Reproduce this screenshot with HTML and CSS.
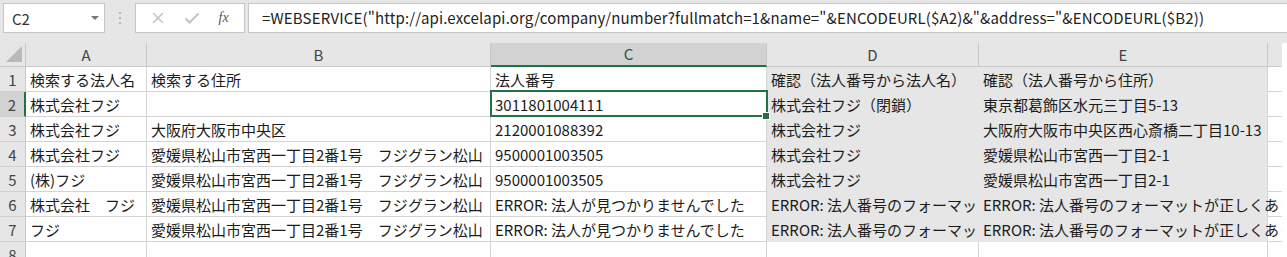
FILE: index.html
```html
<!DOCTYPE html>
<html lang="ja">
<head>
    <meta charset="UTF-8">
    <title>法人番号検索</title>
    <link rel="stylesheet" href="styles.css">
</head>
<body>
    <!-- Formula bar -->
    <div class="formula-bar">
        <div class="name-box">
            <span>C2</span>
            <span class="dropdown"></span>
        </div>
        <div class="grip">
            <span></span><span></span><span></span>
        </div>
        <div class="fx-buttons">
            <svg width="14" height="14" viewBox="0 0 14 14"><path d="M2 2 L12 12 M12 2 L2 12" stroke="#c4c4c4" stroke-width="1.6" fill="none"/></svg>
            <svg width="16" height="14" viewBox="0 0 16 14"><path d="M1.5 7.5 L5.5 11.5 L14.5 2.5" stroke="#c4c4c4" stroke-width="2" fill="none"/></svg>
            <span class="fx">fx</span>
        </div>
        <div class="formula">=WEBSERVICE("http://api.excelapi.org/company/number?fullmatch=1&amp;name="&amp;ENCODEURL($A2)&amp;"&amp;address="&amp;ENCODEURL($B2))</div>
    </div>

    <!-- Sheet -->
    <div class="sheet">
        <div class="hd corner"><span class="tri"></span></div>
        <div class="hd col">A</div>
        <div class="hd col">B</div>
        <div class="hd col active">C</div>
        <div class="hd col">D</div>
        <div class="hd col">E</div>
        <div class="hd col last"></div>

        <div class="hd row">1</div>
        <div class="cell">検索する法人名</div>
        <div class="cell">検索する住所</div>
        <div class="cell">法人番号</div>
        <div class="cell fill">確認（法人番号から法人名）</div>
        <div class="cell fill spill">確認（法人番号から住所）</div>
        <div class="cell empty"></div>

        <div class="hd row active">2</div>
        <div class="cell">株式会社フジ</div>
        <div class="cell"></div>
        <div class="cell current">3011801004111</div>
        <div class="cell fill">株式会社フジ（閉鎖）</div>
        <div class="cell fill spill">東京都葛飾区水元三丁目5-13</div>
        <div class="cell empty"></div>

        <div class="hd row">3</div>
        <div class="cell">株式会社フジ</div>
        <div class="cell">大阪府大阪市中央区</div>
        <div class="cell">2120001088392</div>
        <div class="cell fill">株式会社フジ</div>
        <div class="cell fill spill">大阪府大阪市中央区西心斎橋二丁目10-13</div>
        <div class="cell empty"></div>

        <div class="hd row">4</div>
        <div class="cell">株式会社フジ</div>
        <div class="cell">愛媛県松山市宮西一丁目2番1号　フジグラン松山</div>
        <div class="cell">9500001003505</div>
        <div class="cell fill">株式会社フジ</div>
        <div class="cell fill spill">愛媛県松山市宮西一丁目2-1</div>
        <div class="cell empty"></div>

        <div class="hd row">5</div>
        <div class="cell">(株)フジ</div>
        <div class="cell">愛媛県松山市宮西一丁目2番1号　フジグラン松山</div>
        <div class="cell">9500001003505</div>
        <div class="cell fill">株式会社フジ</div>
        <div class="cell fill spill">愛媛県松山市宮西一丁目2-1</div>
        <div class="cell empty"></div>

        <div class="hd row">6</div>
        <div class="cell">株式会社　フジ</div>
        <div class="cell">愛媛県松山市宮西一丁目2番1号　フジグラン松山</div>
        <div class="cell">ERROR: 法人が見つかりませんでした</div>
        <div class="cell fill">ERROR: 法人番号のフォーマッ</div>
        <div class="cell fill spill">ERROR: 法人番号のフォーマットが正しくありません</div>
        <div class="cell empty"></div>

        <div class="hd row">7</div>
        <div class="cell">フジ</div>
        <div class="cell">愛媛県松山市宮西一丁目2番1号　フジグラン松山</div>
        <div class="cell">ERROR: 法人が見つかりませんでした</div>
        <div class="cell fill">ERROR: 法人番号のフォーマッ</div>
        <div class="cell fill spill">ERROR: 法人番号のフォーマットが正しくありません</div>
        <div class="cell empty"></div>

        <div class="hd row">8</div>
        <div class="cell"></div>
        <div class="cell"></div>
        <div class="cell"></div>
        <div class="cell"></div>
        <div class="cell"></div>
        <div class="cell empty"></div>
    </div>
</body>
</html>
```

FILE: styles.css
```css
body {
    margin: 0;
    width: 1287px;
    height: 257px;
    overflow: hidden;
    background-color: #ffffff;
    font-family: "Noto Sans CJK JP", "Noto Sans", sans-serif;
    color: #1c1c1c;
}

/* Formula bar */

.formula-bar {
    display: flex;
    align-items: flex-start;
    height: 43px;
    padding: 3px 0 0 3px;
    box-sizing: border-box;
    background-color: #e6e6e6;
}

.name-box {
    display: flex;
    align-items: center;
    justify-content: space-between;
    width: 102px;
    height: 30px;
    padding: 0 5px 0 8px;
    box-sizing: border-box;
    background: white;
    border: 1px solid #c6c6c6;
    font-size: 15px;
    color: #333;
}

.dropdown {
    width: 0;
    height: 0;
    border-left: 4px solid transparent;
    border-right: 4px solid transparent;
    border-top: 4px solid #777;
}

.grip {
    display: flex;
    flex-direction: column;
    gap: 3px;
    width: 30px;
    padding-top: 9px;
    align-items: center;
}

.grip span {
    width: 2px;
    height: 2px;
    background-color: #b4b4b4;
}

.fx-buttons {
    display: flex;
    align-items: center;
    justify-content: space-around;
    width: 110px;
    height: 30px;
    padding: 0 6px;
    box-sizing: border-box;
    background: white;
    border: 1px solid #c6c6c6;
}

.fx {
    font-family: "Liberation Serif", serif;
    font-style: italic;
    font-size: 14px;
    color: #555;
}

.formula {
    flex: 1;
    height: 30px;
    margin-left: 3px;
    padding-left: 13px;
    box-sizing: border-box;
    background: white;
    border: 1px solid #c6c6c6;
    border-right: none;
    font-size: 15px;
    letter-spacing: 0.15px;
    line-height: 28px;
    white-space: nowrap;
    color: #222;
}

/* Sheet grid */

.sheet {
    display: grid;
    grid-template-columns: 26px 121px 344px 276px 212px 289px 1fr;
    grid-template-rows: 24px;
    grid-auto-rows: 25px;
    width: 1282px;
    overflow: hidden;
    font-size: 15px;
}

.hd {
    display: flex;
    align-items: center;
    justify-content: center;
    box-sizing: border-box;
    background-color: #e6e6e6;
    color: #444;
    border-right: 1px solid #c8c8c8;
    border-bottom: 1px solid #c8c8c8;
}

.hd.col {
    padding-bottom: 1px;
}

.hd.col.active {
    background-color: #d2d2d2;
    color: #1e5e3a;
    border-bottom: 2px solid #217346;
}

.hd.col.last {
    border-right: none;
}

.hd.row {
    border-bottom-color: #d0d0d0;
}

.hd.row.active {
    background-color: #d2d2d2;
    border-right: 2px solid #217346;
}

.corner {
    position: relative;
}

.tri {
    position: absolute;
    right: 3px;
    bottom: 4px;
    width: 0;
    height: 0;
    border-left: 16px solid transparent;
    border-bottom: 16px solid #b9b9b9;
}

.cell {
    display: flex;
    align-items: center;
    padding: 1px 0 0 4px;
    box-sizing: border-box;
    background-color: white;
    border-right: 1px solid #d4d4d4;
    border-bottom: 1px solid #d4d4d4;
    white-space: nowrap;
    overflow: hidden;
}

.cell.fill {
    background-color: #e7e6e6;
    border-color: #e7e6e6;
}

.cell.spill {
    overflow: visible;
    border-right-color: #d4d4d4;
}

.cell.empty {
    background: transparent;
    border-right: none;
}

.cell.current {
    position: relative;
    overflow: visible;
}

.cell.current::after {
    content: "";
    position: absolute;
    top: -2px;
    left: -1px;
    right: -2px;
    bottom: -1px;
    border: 2px solid #217346;
}

.cell.current::before {
    content: "";
    position: absolute;
    right: -4px;
    bottom: -4px;
    width: 6px;
    height: 6px;
    background-color: #217346;
    border: 1px solid white;
    z-index: 1;
}
```
